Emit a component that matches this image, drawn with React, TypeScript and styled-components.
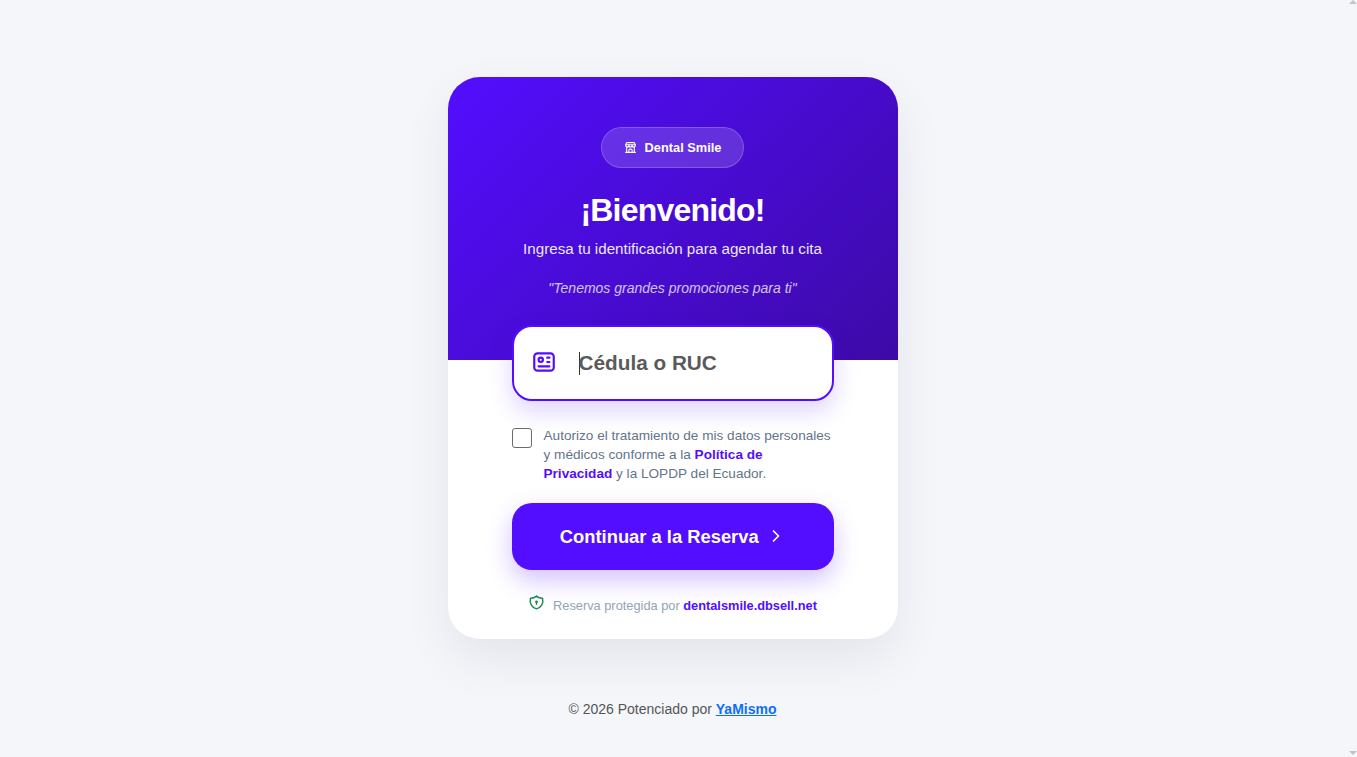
import React from "react";
import styled, { createGlobalStyle } from "styled-components";
import { TbBuildingStore, TbId, TbChevronRight, TbShieldLock } from "react-icons/tb";

const GlobalStyle = createGlobalStyle`
  * { box-sizing: border-box; }
  html, body { margin: 0; height: 100%; }
  body {
    background: #f4f6fa;
    font-family: "Liberation Sans", Arial, sans-serif;
    overflow: hidden;
  }
`;

const Page = styled.main`
  width: 1345px;
  height: 757px;
  display: flex;
  flex-direction: column;
  align-items: center;
  padding-top: 77px;
`;

const Card = styled.section`
  width: 450px;
  height: 562px;
  background: #fff;
  border-radius: 32px;
  box-shadow: 0 20px 50px rgba(20, 20, 50, 0.07);
  overflow: hidden;
`;

const Header = styled.header`
  height: 283px;
  padding-top: 50px;
  background: linear-gradient(135deg, #530dff 0%, #3d0aa6 100%);
  display: flex;
  flex-direction: column;
  align-items: center;
  color: #fff;
`;

const Badge = styled.div`
  height: 41px;
  width: 143px;
  display: flex;
  align-items: center;
  justify-content: center;
  gap: 8px;
  border-radius: 21px;
  background: rgba(255, 255, 255, 0.15);
  border: 1px solid rgba(255, 255, 255, 0.2);
  font-size: 12.8px;
  font-weight: 700;
`;

const Title = styled.h1`
  margin: 24px 0 0;
  font-size: 32px;
  line-height: 37px;
  font-weight: 700;
  letter-spacing: -0.8px;
`;

const Subtitle = styled.p`
  margin: 11px 0 0;
  font-size: 15.2px;
  line-height: 17px;
  opacity: 0.9;
`;

const Promo = styled.p`
  margin: 23px 0 0;
  font-size: 14px;
  line-height: 16px;
  font-style: italic;
  opacity: 0.75;
`;

const Body = styled.div`
  padding: 0 64px;
  display: flex;
  flex-direction: column;
`;

const InputBox = styled.div`
  height: 76px;
  margin-top: -35px;
  display: flex;
  align-items: center;
  padding-left: 17.5px;
  gap: 21.5px;
  background: #fff;
  border: 2px solid #530dff;
  border-radius: 20px;
  box-shadow: 0 10px 25px rgba(83, 13, 255, 0.18);
  color: #530dff;
  position: relative;
  svg { margin-top: -2px; }
`;

const CedulaInput = styled.input`
  flex: 1;
  min-width: 0;
  border: 0;
  outline: 0;
  padding: 0;
  background: transparent;
  font: 700 20.75px "Liberation Sans", Arial, sans-serif;
  color: #333;
  caret-color: #222;
  box-shadow: inset 1px 0 0 #333;
  height: 23px;
  &::placeholder { color: #5a5a5a; opacity: 1; }
`;

const Consent = styled.label`
  margin-top: 25px;
  display: flex;
  gap: 12px;
  font-size: 13.6px;
  line-height: 19px;
  color: #64748b;
`;

const Check = styled.input.attrs({ type: "checkbox" })`
  appearance: none;
  width: 20px;
  height: 20px;
  margin: 2px 0 0;
  flex: none;
  background: #fff;
  border: 1px solid #6b6b6b;
  border-radius: 3px;
`;

const Accent = styled.a`
  color: #530dff;
  font-weight: 700;
  text-decoration: none;
`;

const Continue = styled.button`
  margin-top: 20px;
  height: 67px;
  border: 0;
  padding: 0 0 0 1px;
  border-radius: 20px;
  background: #530dff;
  color: #fff;
  font: 700 18.35px "Liberation Sans", Arial, sans-serif;
  display: flex;
  align-items: center;
  justify-content: center;
  gap: 7.5px;
  box-shadow: 0 10px 25px rgba(83, 13, 255, 0.25);
  svg { margin-top: -1px; }
`;

const Secure = styled.div`
  margin-top: 28px;
  display: flex;
  align-items: center;
  justify-content: center;
  gap: 8px;
  font-size: 12.8px;
  color: #94a3b8;
  svg { color: #198754; margin-top: -6px; }
`;

const Footer = styled.footer`
  margin-top: 62px;
  font-size: 14px;
  line-height: 16px;
  color: #555;
  a { color: #0d6efd; font-weight: 700; }
`;

const ScrollArrow = styled.span<{ $down?: boolean }>`
  position: fixed;
  right: 0;
  width: 0;
  height: 0;
  border-left: 4px solid transparent;
  border-right: 4px solid transparent;
  ${(p) =>
    p.$down
      ? "bottom: 2px; border-top: 4px solid #c4c4c8;"
      : "top: 0; border-bottom: 4px solid #c4c4c8;"}
`;

export default function App() {
  return (
    <>
      <GlobalStyle />
      <Page>
        <Card>
          <Header>
            <Badge>
              <TbBuildingStore size={13} />
              Dental Smile
            </Badge>
            <Title>¡Bienvenido!</Title>
            <Subtitle>Ingresa tu identificación para agendar tu cita</Subtitle>
            <Promo>"Tenemos grandes promociones para ti"</Promo>
          </Header>
          <Body>
            <InputBox>
              <TbId size={26} />
              <CedulaInput placeholder="Cédula o RUC" />
            </InputBox>
            <Consent>
              <Check />
              <span>
                Autorizo el tratamiento de mis datos personales y médicos conforme a la{" "}
                <Accent href="#">Política de Privacidad</Accent> y la LOPDP del Ecuador.
              </span>
            </Consent>
            <Continue>
              Continuar a la Reserva
              <TbChevronRight size={20} />
            </Continue>
            <Secure>
              <TbShieldLock size={17} />
              <span>
                Reserva protegida por <Accent href="#">dentalsmile.dbsell.net</Accent>
              </span>
            </Secure>
          </Body>
        </Card>
        <Footer>
          © 2026 Potenciado por <a href="#">YaMismo</a>
        </Footer>
      </Page>
      <ScrollArrow />
      <ScrollArrow $down />
    </>
  );
}
